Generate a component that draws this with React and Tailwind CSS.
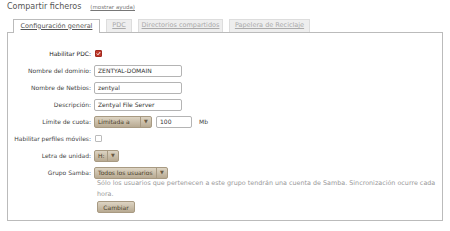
import React from "react";

const font = { fontFamily: '"DejaVu Sans", Verdana, sans-serif' };

function Select({ label, w }) {
  return (
    <div
      className={`flex items-center h-[12px] rounded-[2px] border border-[#a89a82] bg-gradient-to-b from-[#ddd4c3] to-[#b8aa92] text-[6px] text-[#4a3d2a] ${w}`}
    >
      <span className="flex-1 pl-[3px] leading-none whitespace-nowrap">{label}</span>
      <span className="w-[11px] h-full flex items-center justify-center border-l border-[#a89a82] text-[5px] text-[#6a5a42]">
        ▼
      </span>
    </div>
  );
}

function Input({ value, w = "w-[88px]" }) {
  return (
    <div
      className={`h-[12px] ${w} border border-[#b4b4b4] rounded-[2px] bg-white flex items-center pl-[3px] text-[6px] text-[#333] leading-none`}
    >
      {value}
    </div>
  );
}

function Row({ label, bold, children }) {
  return (
    <div className="flex items-center h-[17px]">
      <div
        className={`w-[86px] pr-[3px] text-right text-[6px] whitespace-nowrap ${bold ? "text-[#222]" : "text-[#444]"}`}
      >
        {label}
      </div>
      <div className="flex items-center">{children}</div>
    </div>
  );
}

function Checkbox({ checked }) {
  return checked ? (
    <div className="w-[7px] h-[7px] rounded-[1px] bg-[#c0392b] border border-[#a02a20] flex items-center justify-center ml-[1px]">
      <svg width="5" height="5" viewBox="0 0 10 10">
        <path d="M1.5 5 L4 7.5 L8.5 2" stroke="white" strokeWidth="2" fill="none" />
      </svg>
    </div>
  ) : (
    <div className="w-[7px] h-[7px] rounded-[1px] bg-white border border-[#bbb] ml-[1px]" />
  );
}

export default function App() {
  return (
    <div className="w-[450px] h-[231px] bg-white px-[7px] pt-[3px]" style={font}>
      <div className="flex items-baseline h-[11px]">
        <span className="text-[8px] text-[#555] leading-none">Compartir ficheros</span>
        <span className="ml-[9px] text-[5.5px] text-[#777] underline leading-none">(mostrar ayuda)</span>
      </div>
      <div className="flex items-end h-[18px] pl-[6px] gap-[6px]">
        <div className="h-[14px] w-[87px] bg-white border border-b-0 border-[#bbb] flex items-center justify-center text-[6.5px] text-[#555] underline relative top-[1px]">
          Configuración general
        </div>
        <div className="h-[13px] w-[26px] bg-[#eeeeee] border border-b-0 border-[#ddd] flex items-center justify-center text-[6.5px] text-[#aaa] underline">
          PDC
        </div>
        <div className="h-[13px] w-[85px] bg-[#eeeeee] border border-b-0 border-[#ddd] flex items-center justify-center text-[6.5px] text-[#aaa] underline">
          Directorios compartidos
        </div>
        <div className="h-[13px] w-[81px] bg-[#eeeeee] border border-b-0 border-[#ddd] flex items-center justify-center text-[6.5px] text-[#aaa] underline">
          Papelera de Reciclaje
        </div>
      </div>
      <div className="w-[436px] h-[189px] border border-[#bbb] pt-[12px]">
        <Row label="Habilitar PDC:" bold>
          <Checkbox checked />
        </Row>
        <Row label="Nombre del dominio:">
          <Input value="ZENTYAL-DOMAIN" />
        </Row>
        <Row label="Nombre de Netbios:">
          <Input value="zentyal" />
        </Row>
        <Row label="Descripción:">
          <Input value="Zentyal File Server" />
        </Row>
        <Row label="Límite de cuota:">
          <Select label="Limitada a" w="w-[58px]" />
          <div className="ml-[4px]">
            <Input value="100" w="w-[36px]" />
          </div>
          <span className="ml-[7px] text-[6px] text-[#444]">Mb</span>
        </Row>
        <Row label="Habilitar perfiles móviles:">
          <Checkbox />
        </Row>
        <Row label="Letra de unidad:">
          <Select label="H:" w="w-[25px]" />
        </Row>
        <Row label="Grupo Samba:">
          <Select label="Todos los usuarios" w="w-[74px]" />
        </Row>
        <div className="pl-[89px] text-[6.4px] leading-[11px] text-[#999] -mt-[3px] whitespace-nowrap">
          Sólo los usuarios que pertenecen a este grupo tendrán una cuenta de Samba. Sincronización ocurre cada
          <br />
          hora.
        </div>
        <div className="flex pl-[89px] mt-[1px]">
          <div className="flex items-center justify-center h-[12px] w-[38px] rounded-[2px] border border-[#a89a82] bg-gradient-to-b from-[#ddd4c3] to-[#b8aa92] text-[6px] text-[#4a3d2a]">
            Cambiar
          </div>
        </div>
      </div>
    </div>
  );
}
